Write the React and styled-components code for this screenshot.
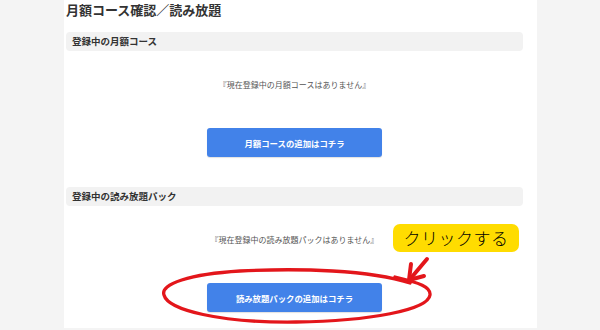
import React from "react";
import styled, { createGlobalStyle } from "styled-components";

const GlobalStyle = createGlobalStyle`
  html, body {
    margin: 0;
    padding: 0;
    background: #f4f4f4;
  }
  body {
    font-family: "Noto Sans CJK JP", "Noto Sans", sans-serif;
    color: #333;
  }
`;

const sections = [
  {
    title: "登録中の月額コース",
    empty: "『現在登録中の月額コースはありません』",
    button: "月額コースの追加はコチラ",
  },
  {
    title: "登録中の読み放題パック",
    empty: "『現在登録中の読み放題パックはありません』",
    button: "読み放題パックの追加はコチラ",
  },
];

export default function App() {
  return (
    <Page>
      <GlobalStyle />
      <Panel>
        <Title>月額コース確認／読み放題</Title>
        {sections.map((s, i) => (
          <Section key={s.title} $first={i === 0}>
            <SectionHeader>{s.title}</SectionHeader>
            <EmptyText>{s.empty}</EmptyText>
            <AddButton type="button">{s.button}</AddButton>
          </Section>
        ))}
      </Panel>

      <Marker width="600" height="330" viewBox="0 0 600 330">
        {/* hand drawn circle round the second button */}
        <path
          d="M410 283 C 370 270, 300 268, 240 271 C 190 274, 160 284, 164 295 C 168 310, 220 323, 296 322 C 370 321, 428 310, 430 295 C 431 287, 420 283, 395 277"
          fill="none"
          stroke="#e3161b"
          strokeWidth="3.3"
          strokeLinecap="round"
        />
        {/* arrow */}
        <path
          d="M427 259 L411 278"
          stroke="#e3161b"
          strokeWidth="4"
          strokeLinecap="round"
        />
        <path
          d="M411 264 L409 280 L424 276"
          fill="none"
          stroke="#e3161b"
          strokeWidth="4"
          strokeLinecap="round"
          strokeLinejoin="round"
        />
      </Marker>
      <Callout>クリックする</Callout>
    </Page>
  );
}

const Page = styled.div`
  position: relative;
  width: 600px;
  height: 330px;
  overflow: hidden;
  background: #f4f4f4;
`;

const Panel = styled.main`
  margin-left: 64px;
  width: 473px;
  height: 328px;
  box-sizing: border-box;
  padding: 0 14px 0 2px;
  background: #fff;
  display: flex;
  flex-direction: column;
`;

const Title = styled.h1`
  margin: 0;
  height: 32px;
  padding-top: 1px;
  box-sizing: border-box;
  font-size: 13px;
  line-height: 18px;
  font-weight: 700;
  color: #333;
`;

const Section = styled.section`
  display: flex;
  flex-direction: column;
  align-items: center;
  margin-top: ${(p) => (p.$first ? 0 : 30)}px;
`;

const SectionHeader = styled.h2`
  align-self: stretch;
  margin: 0;
  height: 19px;
  padding-left: 6px;
  border-radius: 4px;
  background: #f2f2f2;
  font-size: 9.5px;
  line-height: 19px;
  font-weight: 700;
  color: #333;
`;

const EmptyText = styled.p`
  margin: 28px 0 0;
  font-size: 8px;
  line-height: 12px;
  color: #555;
`;

const AddButton = styled.button`
  margin-top: 37px;
  width: 175px;
  height: 29px;
  border: none;
  border-radius: 3px;
  background: #4282e9;
  box-shadow: 0 1px 1px rgba(0, 0, 0, 0.12);
  color: #fff;
  font-family: inherit;
  font-size: 8.4px;
  font-weight: 700;
  cursor: pointer;
`;

const Marker = styled.svg`
  position: absolute;
  left: 0;
  top: 0;
  pointer-events: none;
`;

const Callout = styled.div`
  position: absolute;
  left: 393px;
  top: 224px;
  width: 126px;
  height: 28px;
  border-radius: 7px;
  background: #ffdc00;
  color: #000;
  font-size: 17px;
  font-weight: 300;
  line-height: 28px;
  text-align: center;
  letter-spacing: 0.5px;
`;
